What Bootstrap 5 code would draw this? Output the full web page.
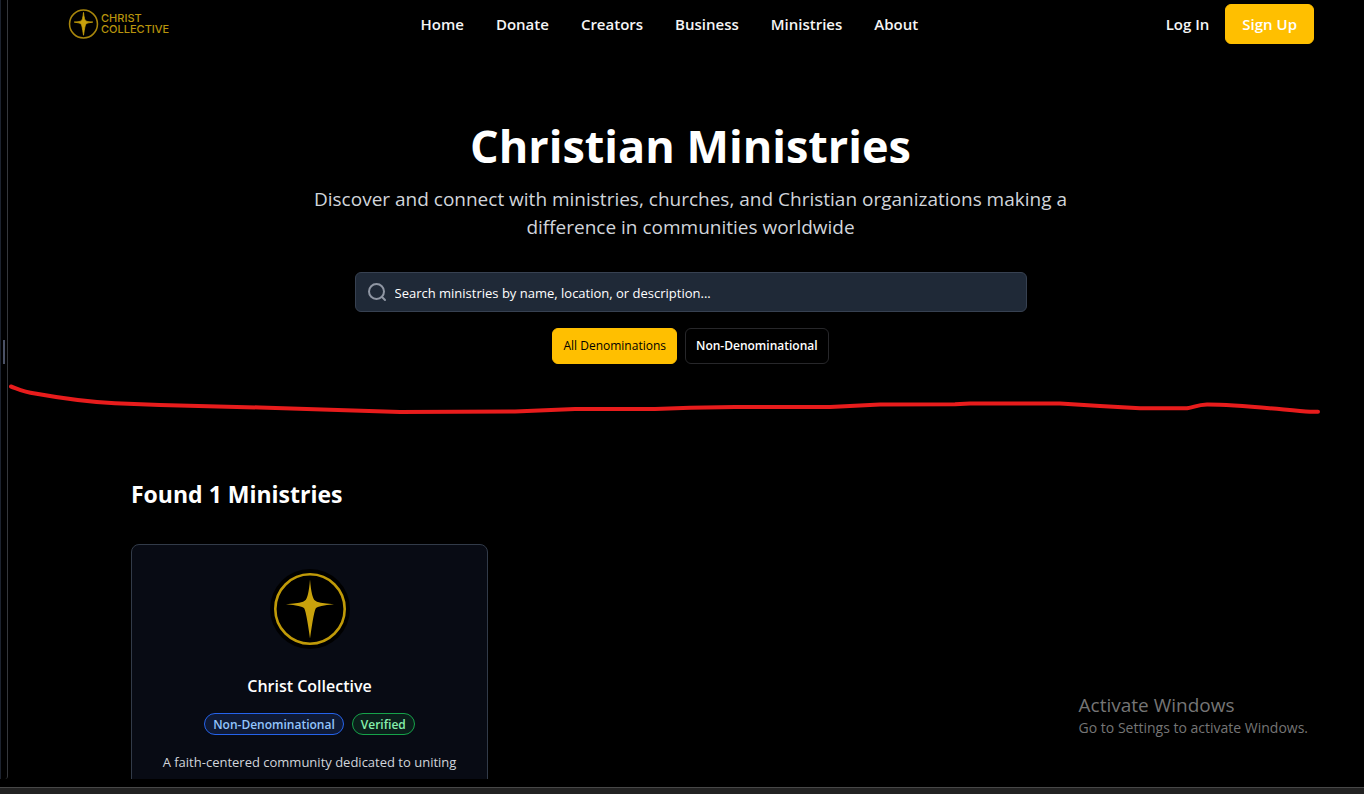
<!DOCTYPE html>
<html lang="en" data-bs-theme="dark">
<head>
<meta charset="utf-8">
<meta name="viewport" content="width=device-width, initial-scale=1">
<title>Christian Ministries</title>
<link href="https://cdn.jsdelivr.net/npm/bootstrap@5.3.0/dist/css/bootstrap.min.css" rel="stylesheet">
<style>
  body { background: #000; color: #fff; font-family: "Open Sans", "Noto Sans", sans-serif; }
  a { text-decoration: none; }
  .splitter { width: 8px; border-left: 1px solid #1c222e; border-right: 1px solid #35373b; border-bottom-right-radius: 3px; }
  .splitter-grip { width: 2px; height: 24px; background: #4b5266; margin-top: -76px; }
  .preview { padding-left: 9px; min-width: 0; }
  .bottom-gap { height: 8px; }
  .taskbar { height: 7px; background: #222; border-top: 1px solid #484848; }

  .top-nav { padding: 4px 50px 4px 51px; }
  .brand { width: 121px; color: #b8940c; font: 500 11px/11px Inter, sans-serif; gap: 2px; }
  .top-link { color: #f5f5f5; font-size: 15px; font-weight: 600; line-height: 24px; }
  .nav-list { gap: 32px; }
  .btn-gold { --bs-btn-bg: #ffbf00; --bs-btn-border-color: #ffbf00; --bs-btn-hover-bg: #e6ac00; --bs-btn-hover-border-color: #e6ac00; }
  .btn-signup { --bs-btn-color: #fff; font-size: 15px; font-weight: 600; height: 40px; padding: 0 16px; }

  .hero { padding-top: 68px; }
  .hero-title { font-size: 45px; line-height: 60px; font-weight: 700; margin-bottom: 9px; }
  .hero-text { max-width: 768px; color: #d1d5db; font-size: 19px; line-height: 28px; margin-bottom: 31px; }
  .search-box { max-width: 672px; }
  .search-box svg { position: absolute; left: 12px; top: 10px; }
  .search-input, .search-input:focus { height: 40px; padding: 2px 12px 0 39px; background: #1f2937; border-color: #374151; font-size: 13px; color: #fff; }
  .search-input::placeholder { color: #fff; opacity: 1; }
  .btn-filter { height: 36px; padding: 0 10px; font-size: 12px; font-weight: 600; border-radius: 6px; }
  .btn-gold.btn-filter { --bs-btn-color: #000; font-weight: 500; }
  .btn-plain { --bs-btn-color: #fff; --bs-btn-border-color: #27272a; --bs-btn-hover-bg: #18181b; }

  .results { max-width: 1119px; padding-top: 114px; }
  .results-title { font-size: 23px; line-height: 32px; font-weight: 700; margin-bottom: 34px; }
  .ministry { background: #080b14; border: 1px solid #323b49; border-radius: 8px; padding: 24px 23px; }
  .ministry-name { font-size: 16px; line-height: 28px; font-weight: 600; margin: 23px 0 13px; }
  .tag { height: 22px; line-height: 21px; padding: 0 8px; border: 1px solid; border-radius: 11px; font-size: 12px; font-weight: 600; }
  .tag-blue { background: #0f1a35; border-color: #2563eb; color: #93c5fd; }
  .tag-green { background: #0b1f1b; border-color: #16a34a; color: #86efac; }
  .ministry-text { color: #d1d5db; font-size: 13px; line-height: 23px; margin-top: 16px; }

  .pen-stroke { top: 380px; left: 0; width: 100%; pointer-events: none; }
  .watermark { right: 56px; bottom: 56px; color: #757575; font-size: 14px; line-height: 20px; }
  .watermark-title { font-size: 19px; line-height: 25px; }
</style>
</head>
<body>
<div class="vh-100 d-flex flex-column overflow-hidden position-relative">
  <div class="d-flex flex-fill overflow-hidden">
    <div class="splitter flex-shrink-0 d-flex align-items-center justify-content-center"><div class="splitter-grip"></div></div>
    <div class="preview flex-fill">
      <nav class="top-nav d-flex align-items-center justify-content-between" aria-label="Main">
        <a href="#" class="brand d-flex align-items-center">
          <svg width="31" height="32" viewBox="0 0 80 80" aria-hidden="true"><circle cx="40" cy="40" r="36" fill="none" stroke="#a8860c" stroke-width="4"/><path d="M40 10 Q42 30 46 32 Q48 34 64 35 Q48 37 46 40 Q44 42 40 69 Q36 42 34 40 Q32 37 16 35 Q32 34 34 32 Q38 30 40 10Z" fill="#c9a20c" stroke="#c9a20c" stroke-width="2"/></svg>
          <span>CHRIST<br>COLLECTIVE</span>
        </a>
        <ul class="nav-list list-unstyled d-flex mb-0">
          <li><a class="top-link" href="#">Home</a></li>
          <li><a class="top-link" href="#">Donate</a></li>
          <li><a class="top-link" href="#">Creators</a></li>
          <li><a class="top-link" href="#">Business</a></li>
          <li><a class="top-link" href="#">Ministries</a></li>
          <li><a class="top-link" href="#">About</a></li>
        </ul>
        <div class="d-flex align-items-center gap-3">
          <a class="top-link ps-3" href="#">Log In</a>
          <button type="button" class="btn btn-gold btn-signup">Sign Up</button>
        </div>
      </nav>

      <main>
        <section class="hero text-center">
          <h1 class="hero-title">Christian Ministries</h1>
          <p class="hero-text mx-auto">Discover and connect with ministries, churches, and Christian organizations making a difference in communities worldwide</p>
          <form class="search-box position-relative mx-auto mb-3">
            <svg width="20" height="20" viewBox="0 0 20 20" fill="none" stroke="#8f96a3" stroke-width="2" stroke-linecap="round" aria-hidden="true"><circle cx="9.5" cy="9.5" r="7.5"/><path d="M15 15l3 3"/></svg>
            <input type="search" class="form-control search-input" aria-label="Search ministries" placeholder="Search ministries by name, location, or description...">
          </form>
          <div class="d-flex justify-content-center gap-2">
            <button type="button" class="btn btn-gold btn-filter">All Denominations</button>
            <button type="button" class="btn btn-plain btn-filter">Non-Denominational</button>
          </div>
        </section>

        <section class="results mx-auto">
          <h2 class="results-title">Found 1 Ministries</h2>
          <div class="row row-cols-3 gx-4">
            <div class="col">
              <article class="ministry text-center">
                <svg width="80" height="80" viewBox="0 0 80 80" aria-hidden="true"><circle cx="40" cy="40" r="40" fill="#000"/><circle cx="40" cy="40" r="34.7" fill="none" stroke="#c09a08" stroke-width="2.6"/><path d="M40 10.500 Q41.500 29 45 31.500 Q47 34 64 35.300 Q48 37 46 39 Q44 41 40 69.500 Q36 41 34 39 Q32 37 16 35.300 Q33 34 35 31.500 Q38.500 29 40 10.500Z" fill="#c9a20c"/></svg>
                <h3 class="ministry-name">Christ Collective</h3>
                <div class="d-flex justify-content-center gap-2">
                  <span class="tag tag-blue">Non-Denominational</span>
                  <span class="tag tag-green">Verified</span>
                </div>
                <p class="ministry-text mb-0">A faith-centered community dedicated to uniting</p>
              </article>
            </div>
          </div>
        </section>
      </main>
    </div>
  </div>
  <div class="bottom-gap flex-shrink-0"></div>
  <div class="taskbar flex-shrink-0"></div>

  <svg class="pen-stroke position-absolute" viewBox="0 0 1364 40" fill="none" stroke="#e81c1c" stroke-width="4" stroke-linecap="round" stroke-linejoin="round" aria-hidden="true"><path d="M11 6.500 C18 9 24 12 35 13.500 C60 18 90 22 115 23.300 L160 25 L260 27.500 L400 32 L515 31.500 L575 29 L655 29 L690 27.800 L735 27 L830 27 L880 24.500 L955 24.300 L970 23.500 L1060 23.500 L1100 26 L1140 28.300 L1187 28.300 C1195 27 1197 25 1207 24.600 C1240 24.500 1285 30 1310 31.800 L1318 31.800"/></svg>
  <div class="watermark position-absolute"><div class="watermark-title">Activate Windows</div><div>Go to Settings to activate Windows.</div></div>
</div>
<script src="https://cdn.jsdelivr.net/npm/bootstrap@5.3.0/dist/js/bootstrap.bundle.min.js"></script>
</body>
</html>
